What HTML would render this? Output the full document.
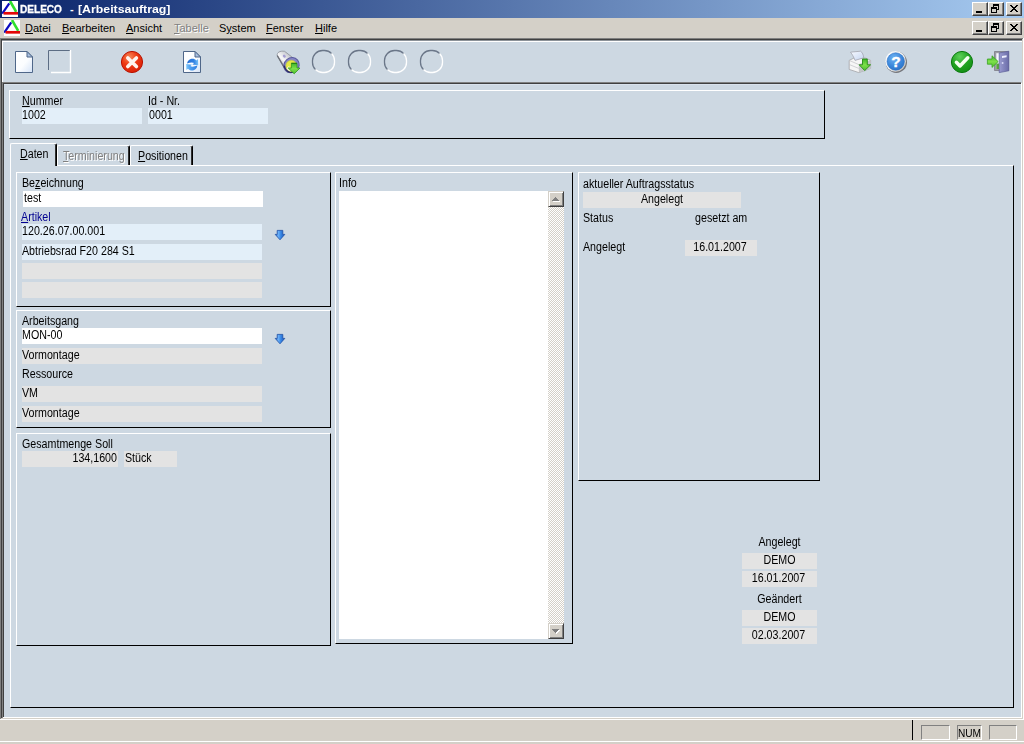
<!DOCTYPE html>
<html lang="de">
<head>
<meta charset="utf-8">
<title>DELECO - [Arbeitsauftrag]</title>
<style>
*{box-sizing:border-box;margin:0;padding:0}
html,body{width:1024px;height:744px;overflow:hidden;background:#d4d0c8}
body{position:relative;font-family:"Liberation Sans",sans-serif;font-size:11px;color:#000;line-height:13px}
.a{position:absolute}
u{text-decoration:underline;text-underline-offset:1px;text-decoration-thickness:1px}
#title{left:0;top:0;width:1024px;height:18px;background:linear-gradient(to right,#0a246a 0%,#a6caf0 100%)}
#title .t{left:20px;top:3px;color:#fff;font-weight:bold;font-size:11px;white-space:pre}
#menu{left:0;top:18px;width:1024px;height:20px;background:#d4d0c8}
#menu span{position:absolute;top:4px;white-space:nowrap}
#menu span.dis{color:#808080;text-shadow:1px 1px 0 #fff}
.wb{position:absolute;width:16px;height:14px;background:#d4d0c8;border:1px solid;border-color:#fff #404040 #404040 #fff;box-shadow:inset -1px -1px 0 #808080}
#mdi{left:0;top:38px;width:1024px;height:682px;background:#cdd8e2}
.fld{position:absolute;white-space:nowrap;overflow:hidden}
.fld .x{position:absolute;top:0;font-size:12px;line-height:14px;transform:scaleX(0.89);white-space:nowrap}
.fb{background:#e3eff9}
.fg{background:#e3e3e3}
.fw{background:#fff}
.lbl{position:absolute;white-space:nowrap;font-size:12px;line-height:14px;transform:scaleX(0.89)}
.sbtn{position:absolute;left:0;width:16px;height:16px;background:#d4d0c8;border:1px solid;border-color:#d4d0c8 #404040 #404040 #d4d0c8;box-shadow:inset 1px 1px 0 #fff,inset -1px -1px 0 #808080}
.gb{position:absolute;border:1px solid;border-color:#fff #000 #000 #fff}
.tab{background:#cdd8e2;border-radius:2px 2px 0 0;border:1px solid;border-color:#fff #000 transparent #fff;border-bottom:0;box-shadow:inset -1px 0 0 #303030}
.tab span{position:absolute;white-space:nowrap;font-size:12px;line-height:14px;transform:scaleX(0.89);transform-origin:0 0}
.tab.dis span{color:#808080;text-shadow:1px 1px 0 #fff}
</style>
</head>
<body>
<div id="title" class="a">
<svg class="a" style="left:2px;top:1px" width="16" height="16" viewBox="0 0 16 16"><rect width="16" height="16" fill="#fff"/><path d="M0.2 12.6 L7.3 2.4" stroke="#0a0ac0" stroke-width="2.2" fill="none"/><path d="M8 0 L14.2 10.8" stroke="#2ee02e" stroke-width="2.6" fill="none"/><path d="M1.6 12.3 H16" stroke="#e40808" stroke-width="2.7" fill="none"/></svg>
<div class="a t" style="left:20px;transform:scaleX(.915);transform-origin:0 0;-webkit-text-stroke:.3px #fff">DELECO</div>
<div class="a t" style="left:70px">-</div>
<div class="a t" style="left:78px;transform:scaleX(1.12);transform-origin:0 0">[Arbeitsauftrag]</div>
<div class="wb" style="left:972px;top:2px"><svg class="a" style="left:-1px;top:-1px" width="16" height="14" viewBox="0 0 16 14" shape-rendering="crispEdges" fill="#000"><rect x="4" y="9" width="6" height="2"/></svg></div>
<div class="wb" style="left:988px;top:2px"><svg class="a" style="left:-1px;top:-1px" width="16" height="14" viewBox="0 0 16 14" shape-rendering="crispEdges" fill="#000"><rect x="5" y="2" width="6" height="2"/><rect x="5" y="4" width="1" height="1"/><rect x="10" y="4" width="1" height="4"/><rect x="9" y="7" width="2" height="1"/><rect x="3" y="5" width="6" height="2"/><rect x="3" y="7" width="1" height="4"/><rect x="8" y="7" width="1" height="4"/><rect x="3" y="10" width="6" height="1"/></svg></div>
<div class="wb" style="left:1006px;top:2px"><svg class="a" style="left:-1px;top:-1px" width="16" height="14" viewBox="0 0 16 14" shape-rendering="crispEdges" fill="#000"><rect x="4" y="3" width="1" height="1"/><rect x="5" y="3" width="1" height="1"/><rect x="10" y="3" width="1" height="1"/><rect x="11" y="3" width="1" height="1"/><rect x="5" y="4" width="1" height="1"/><rect x="6" y="4" width="1" height="1"/><rect x="9" y="4" width="1" height="1"/><rect x="10" y="4" width="1" height="1"/><rect x="6" y="5" width="1" height="1"/><rect x="7" y="5" width="1" height="1"/><rect x="8" y="5" width="1" height="1"/><rect x="9" y="5" width="1" height="1"/><rect x="7" y="6" width="1" height="1"/><rect x="8" y="6" width="1" height="1"/><rect x="6" y="7" width="1" height="1"/><rect x="7" y="7" width="1" height="1"/><rect x="8" y="7" width="1" height="1"/><rect x="9" y="7" width="1" height="1"/><rect x="5" y="8" width="1" height="1"/><rect x="6" y="8" width="1" height="1"/><rect x="9" y="8" width="1" height="1"/><rect x="10" y="8" width="1" height="1"/><rect x="4" y="9" width="1" height="1"/><rect x="5" y="9" width="1" height="1"/><rect x="10" y="9" width="1" height="1"/><rect x="11" y="9" width="1" height="1"/></svg></div>
</div>
<div id="menu" class="a">
<svg class="a" style="left:4px;top:2px" width="16" height="16" viewBox="0 0 16 16"><rect width="16" height="16" fill="#fff"/><path d="M0.2 12.6 L7.3 2.4" stroke="#0a0ac0" stroke-width="2.2" fill="none"/><path d="M8 0 L14.2 10.8" stroke="#2ee02e" stroke-width="2.6" fill="none"/><path d="M1.6 12.3 H16" stroke="#e40808" stroke-width="2.7" fill="none"/></svg>
<span style="left:25px" class=""><u>D</u>atei</span>
<span style="left:62px" class=""><u>B</u>earbeiten</span>
<span style="left:126px" class=""><u>A</u>nsicht</span>
<span style="left:174px" class="dis"><u>T</u>abelle</span>
<span style="left:219px" class="">S<u>y</u>stem</span>
<span style="left:266px" class=""><u>F</u>enster</span>
<span style="left:315px" class=""><u>H</u>ilfe</span>
<div class="wb" style="left:972px;top:3px"><svg class="a" style="left:-1px;top:-1px" width="16" height="14" viewBox="0 0 16 14" shape-rendering="crispEdges" fill="#000"><rect x="4" y="9" width="6" height="2"/></svg></div>
<div class="wb" style="left:988px;top:3px"><svg class="a" style="left:-1px;top:-1px" width="16" height="14" viewBox="0 0 16 14" shape-rendering="crispEdges" fill="#000"><rect x="5" y="2" width="6" height="2"/><rect x="5" y="4" width="1" height="1"/><rect x="10" y="4" width="1" height="4"/><rect x="9" y="7" width="2" height="1"/><rect x="3" y="5" width="6" height="2"/><rect x="3" y="7" width="1" height="4"/><rect x="8" y="7" width="1" height="4"/><rect x="3" y="10" width="6" height="1"/></svg></div>
<div class="wb" style="left:1006px;top:3px"><svg class="a" style="left:-1px;top:-1px" width="16" height="14" viewBox="0 0 16 14" shape-rendering="crispEdges" fill="#000"><rect x="4" y="3" width="1" height="1"/><rect x="5" y="3" width="1" height="1"/><rect x="10" y="3" width="1" height="1"/><rect x="11" y="3" width="1" height="1"/><rect x="5" y="4" width="1" height="1"/><rect x="6" y="4" width="1" height="1"/><rect x="9" y="4" width="1" height="1"/><rect x="10" y="4" width="1" height="1"/><rect x="6" y="5" width="1" height="1"/><rect x="7" y="5" width="1" height="1"/><rect x="8" y="5" width="1" height="1"/><rect x="9" y="5" width="1" height="1"/><rect x="7" y="6" width="1" height="1"/><rect x="8" y="6" width="1" height="1"/><rect x="6" y="7" width="1" height="1"/><rect x="7" y="7" width="1" height="1"/><rect x="8" y="7" width="1" height="1"/><rect x="9" y="7" width="1" height="1"/><rect x="5" y="8" width="1" height="1"/><rect x="6" y="8" width="1" height="1"/><rect x="9" y="8" width="1" height="1"/><rect x="10" y="8" width="1" height="1"/><rect x="4" y="9" width="1" height="1"/><rect x="5" y="9" width="1" height="1"/><rect x="10" y="9" width="1" height="1"/><rect x="11" y="9" width="1" height="1"/></svg></div>
</div>
<div id="mdi" class="a">
<div class="a" style="left:0px;top:0px;width:1023px;height:1px;background:#808080"></div>
<div class="a" style="left:0px;top:0px;width:1px;height:681px;background:#808080"></div>
<div class="a" style="left:1px;top:1px;width:1021px;height:1px;background:#404040"></div>
<div class="a" style="left:1px;top:1px;width:1px;height:680px;background:#404040"></div>
<div class="a" style="left:1023px;top:0px;width:1px;height:682px;background:#fff"></div>
<div class="a" style="left:1022px;top:1px;width:1px;height:680px;background:#d4d0c8"></div>
<div class="a" style="left:0px;top:681px;width:1024px;height:1px;background:#fff"></div>
<div class="a" style="left:1px;top:680px;width:1022px;height:1px;background:#d4d0c8"></div>
<div class="a" style="left:2px;top:2px;width:1020px;height:1px;background:#8d9399"></div>
<div class="a" style="left:2px;top:3px;width:1020px;height:1px;background:#fff"></div>
<div class="a" style="left:2px;top:3px;width:1px;height:41px;background:#fff"></div>
<div class="a" style="left:2px;top:44px;width:1019px;height:1px;background:#808080"></div>
<div class="a" style="left:3px;top:45px;width:1018px;height:1px;background:#404040"></div>
<div class="a" style="left:2px;top:44px;width:1px;height:636px;background:#808080"></div>
<div class="a" style="left:3px;top:45px;width:1px;height:634px;background:#404040"></div>
<div class="a" style="left:4px;top:46px;width:1017px;height:1px;background:#d9e2ec"></div>
<div class="a" style="left:1021px;top:45px;width:1px;height:635px;background:#fff"></div>
<div class="a" style="left:3px;top:679px;width:1019px;height:1px;background:#fff"></div>
</div>
<svg class="a" style="left:0;top:40px" width="1024" height="42" viewBox="0 40 1024 42"><defs><linearGradient id="gdoc" x1="0" y1="0" x2="1" y2="1"><stop offset="0" stop-color="#ffffff"/><stop offset=".55" stop-color="#fbfdff"/><stop offset="1" stop-color="#d5e3f7"/></linearGradient><linearGradient id="ggreen" x1="0" y1="0" x2="0" y2="1"><stop offset="0" stop-color="#3fb52a"/><stop offset=".5" stop-color="#7ee04a"/><stop offset="1" stop-color="#4ec030"/></linearGradient><radialGradient id="gred" cx=".38" cy=".28" r=".8"><stop offset="0" stop-color="#f58a5a"/><stop offset=".45" stop-color="#ee3a14"/><stop offset="1" stop-color="#d81c04"/></radialGradient><radialGradient id="ggrn" cx=".4" cy=".25" r=".85"><stop offset="0" stop-color="#5fd05a"/><stop offset=".5" stop-color="#22a322"/><stop offset="1" stop-color="#0f8a12"/></radialGradient><radialGradient id="gblue" cx=".4" cy=".3" r=".8"><stop offset="0" stop-color="#6fb2f2"/><stop offset=".6" stop-color="#3a86da"/><stop offset="1" stop-color="#2a6fc4"/></radialGradient><linearGradient id="gsilver" x1="0" y1="0" x2="1" y2="1"><stop offset="0" stop-color="#ffffff"/><stop offset=".5" stop-color="#f4f4f4"/><stop offset="1" stop-color="#b8b4ac"/></linearGradient><linearGradient id="gtube" x1="0" y1="1" x2="1" y2="0"><stop offset="0" stop-color="#7c8088"/><stop offset=".42" stop-color="#f8f8fa"/><stop offset="1" stop-color="#a4a8b0"/></linearGradient><linearGradient id="gdoor" x1="0" y1="0" x2="1" y2="0"><stop offset="0" stop-color="#9a9cd0"/><stop offset="1" stop-color="#6a6ca8"/></linearGradient><linearGradient id="gbarrow" x1="0" y1="0" x2="0" y2="1"><stop offset="0" stop-color="#4a8fe0"/><stop offset="1" stop-color="#1f5fc0"/></linearGradient><linearGradient id="gpaper" x1="0" y1="0" x2="1" y2="1"><stop offset="0" stop-color="#f8faff"/><stop offset="1" stop-color="#c4d4f0"/></linearGradient><linearGradient id="grefA" x1="0" y1="0" x2="1" y2="0"><stop offset="0" stop-color="#2872d6"/><stop offset=".6" stop-color="#2f80e2"/><stop offset="1" stop-color="#74c0f8"/></linearGradient><linearGradient id="grefB" x1="0" y1="0" x2="1" y2="0"><stop offset="0" stop-color="#2f7ee0"/><stop offset=".6" stop-color="#4a9cee"/><stop offset="1" stop-color="#7cc6fa"/></linearGradient><linearGradient id="gring" x1="0" y1="0" x2="1" y2="1"><stop offset="0" stop-color="#667284"/><stop offset=".47" stop-color="#6e7a8c"/><stop offset=".53" stop-color="#ffffff"/><stop offset="1" stop-color="#ffffff"/></linearGradient></defs><path d="M15.5 51.5 H27 L32.5 57 V72.5 H15.5 Z" fill="url(#gdoc)" stroke="#4f6789" stroke-width="1"/><path d="M27 51.5 V57 H32.5 Z" fill="#a9c0e0" stroke="#4f6789" stroke-width="1" stroke-linejoin="round"/><path d="M48.5 70 V50.5 H70" fill="none" stroke="#5c6d84" stroke-width="1"/><path d="M51 72.5 H70.5 V50" fill="none" stroke="#ffffff" stroke-width="1.4"/><circle cx="132" cy="62" r="10.6" fill="url(#gred)" stroke="#b81402" stroke-width="1"/><path d="M127.8 57.9 L136.4 66.5 M136.4 57.9 L127.8 66.5" stroke="#fff4ee" stroke-width="3.6" stroke-linecap="round" fill="none"/><path d="M183.5 51.5 H195 L200.5 57 V72.5 H183.5 Z" fill="url(#gdoc)" stroke="#4f6789" stroke-width="1"/><path d="M195 51.5 V57 H200.5 Z" fill="#a9c0e0" stroke="#4f6789" stroke-width="1" stroke-linejoin="round"/><path d="M187.1 63.6 C187.6 58.2 194 57.3 196.4 60.4 L198 59.1 L198.2 65.3 L192.4 64.5 L194.2 63.1 C192.8 62.2 190.2 62.2 187.1 63.6 Z" fill="url(#grefA)"/><path d="M187.1 63.6 C187.6 58.2 194 57.3 196.4 60.4 L198 59.1 L198.2 65.3 L192.4 64.5 L194.2 63.1 C192.8 62.2 190.2 62.2 187.1 63.6 Z" fill="url(#grefB)" transform="rotate(180 192.2 64.6)"/><path d="M277.3 55.6 C276.6 52.6 279.8 50.6 284.6 51.3 L293.2 58 L284 67.4 Z" fill="url(#gtube)" stroke="#8c9098" stroke-width=".8" stroke-linejoin="round"/><path d="M277.5 56 L284 67.2" fill="none" stroke="#6c7078" stroke-width="1.4" stroke-linecap="round"/><ellipse cx="284.3" cy="56.2" rx="1.3" ry="1.7" fill="#a49ed2" transform="rotate(-40 284.3 56.2)"/><ellipse cx="291.5" cy="65.2" rx="8" ry="7.3" fill="#8686c6" stroke="#5a5a9c" stroke-width="1" transform="rotate(-40 291.5 65.2)"/><path d="M284.3 66.2 C285 70.6 289.2 73 293.2 72.2" fill="none" stroke="#2c2c64" stroke-width="1.5" stroke-linecap="round"/><ellipse cx="291.3" cy="65.8" rx="5.4" ry="5.6" fill="#e4e846" stroke="#c4cc3a" stroke-width=".6"/><path d="M286.6 68 C287.4 70.6 289.6 71.6 291.6 71.2 L289 66 Z" fill="#f4f6d0"/><path d="M291.4 63.3 H297 V68 H300 L294.2 73.8 L288.2 68 H291.4 Z" fill="url(#ggreen)" stroke="#2f9a1c" stroke-width=".8" stroke-linejoin="round"/><path d="M291.4 63.3 H297" fill="none" stroke="#1f7a10" stroke-width="1"/><rect x="312.5" y="50.5" width="22" height="22" rx="10" ry="10" fill="none" stroke="url(#gring)" stroke-width="1.3"/><rect x="348.5" y="50.5" width="22" height="22" rx="10" ry="10" fill="none" stroke="url(#gring)" stroke-width="1.3"/><rect x="384.5" y="50.5" width="22" height="22" rx="10" ry="10" fill="none" stroke="url(#gring)" stroke-width="1.3"/><rect x="420.5" y="50.5" width="22" height="22" rx="10" ry="10" fill="none" stroke="url(#gring)" stroke-width="1.3"/><path d="M849.2 60.4 L853.6 58.2 L866 58.2 L870.6 60.4 V68.4 L858.8 72.6 L849.2 69.4 Z" fill="#f6f6f6" stroke="#a4a4a8" stroke-width=".8" stroke-linejoin="round"/><path d="M858.8 64.6 L870.6 60.4 V68.4 L858.8 72.6 Z" fill="#c4c6c8"/><path d="M849.2 60.4 L858.8 64.6 L870.6 60.4 M849.4 64.6 L858.8 68.4" fill="none" stroke="#c0c0c4" stroke-width=".7"/><path d="M850.5 52.2 L860.6 51.2 C862.4 52.4 863.4 55 863.8 57.8 L855 60.4 C853.6 57 852.4 54.4 850.5 52.2 Z" fill="url(#gpaper)" stroke="#9c9ca6" stroke-width=".7" stroke-linejoin="round"/><path d="M862.5 59 H867.3 V64.8 H870.6 L864.7 70.6 L859.2 64.8 H862.5 Z" fill="url(#ggreen)" stroke="#258c14" stroke-width=".9" stroke-linejoin="round"/><circle cx="896.3" cy="62.2" r="10.7" fill="#74767c"/><circle cx="895.6" cy="61.4" r="10.4" fill="url(#gsilver)"/><circle cx="895.7" cy="61.5" r="8.7" fill="url(#gblue)" stroke="#2c70c4" stroke-width=".6"/><text x="895.9" y="67.2" text-anchor="middle" font-family="Liberation Sans,sans-serif" font-weight="bold" font-size="15.5" fill="#ffffff" stroke="#ffffff" stroke-width=".4">?</text><circle cx="962" cy="62" r="10.6" fill="url(#ggrn)" stroke="#0c7a10" stroke-width="1"/><path d="M956.4 62.3 L960 66 L967.8 57.8" fill="none" stroke="#f6fff2" stroke-width="3.5" stroke-linecap="round" stroke-linejoin="round"/><path d="M994.5 51.5 H1008.5 V70.5 H994.5 Z" fill="#9c9ca4" stroke="#7c7c86" stroke-width=".8"/><path d="M996.3 53.2 H1001 V69 H996.3 Z" fill="#f6f8ff"/><path d="M996.3 63.5 H999 V69 H996.3 Z" fill="#58a838"/><path d="M999.2 53 L1008.8 51.2 V70.8 L999.2 72.6 Z" fill="url(#gdoor)" stroke="#5c5e9a" stroke-width=".7" stroke-linejoin="round"/><path d="M1002 56 L1006.6 55.2 V57.2 L1002 58 Z" fill="#eef0ff"/><rect x="1001.8" y="62.2" width="1.6" height="1.6" fill="#e4e6ff"/><path d="M987.4 59 H992 V55.8 L998.2 61.6 L992 67.4 V64.2 H987.4 Z" fill="url(#ggreen)" stroke="#3aa324" stroke-width=".8" stroke-linejoin="round"/></svg>
<div id="c" class="a" style="left:0;top:0;width:1024px;height:744px">
<div class="gb" style="left:9px;top:90px;width:816px;height:49px;"></div>
<div class="lbl" style="left:22px;top:94px;transform-origin:0 0;"><u>N</u>ummer</div>
<div class="fld fb" style="left:22px;top:108px;width:120px;height:16px"><span class="x" style="left:0px;right:0px;transform-origin:0 0;text-align:left">1002</span></div>
<div class="lbl" style="left:148px;top:94px;transform-origin:0 0;">Id - Nr.</div>
<div class="fld fb" style="left:148px;top:108px;width:120px;height:16px"><span class="x" style="left:1px;right:1px;transform-origin:0 0;text-align:left">0001</span></div>
<div class="a" id="page" style="left:10px;top:165px;width:1004px;height:543px;border:1px solid;border-color:#fff #000 #000 #fff"></div>
<div class="a tab sel" style="left:10px;top:143px;width:47px;height:23px"><span style="left:9px;top:3px"><u>D</u>aten</span></div>
<div class="a tab dis" style="left:57px;top:145px;width:73px;height:20px"><span style="left:5px;top:3px"><u>T</u>erminierung</span></div>
<div class="a tab" style="left:130px;top:145px;width:63px;height:20px"><span style="left:7px;top:3px"><u>P</u>ositionen</span></div>
<div class="gb" style="left:16px;top:172px;width:315px;height:135px;"></div>
<div class="lbl" style="left:22px;top:176px;transform-origin:0 0;">Be<u>z</u>eichnung</div>
<div class="fld fw" style="left:23px;top:191px;width:240px;height:16px"><span class="x" style="left:1px;right:1px;transform-origin:0 0;text-align:left">test</span></div>
<div class="lbl" style="left:21px;top:210px;transform-origin:0 0;color:#000090;"><u>A</u>rtikel</div>
<div class="fld fb" style="left:22px;top:224px;width:240px;height:16px"><span class="x" style="left:0px;right:0px;transform-origin:0 0;text-align:left">120.26.07.00.001</span></div>
<div class="fld fb" style="left:22px;top:244px;width:240px;height:16px"><span class="x" style="left:0px;right:0px;transform-origin:0 0;text-align:left">Abtriebsrad F20 284 S1</span></div>
<div class="fld fg" style="left:22px;top:263px;width:240px;height:16px"></div>
<div class="fld fg" style="left:22px;top:282px;width:240px;height:16px"></div>
<svg class="a" style="left:274px;top:229px" width="13" height="13" viewBox="274 229 13 13"><defs><linearGradient id="gba230" x1="0" y1="0" x2="1" y2="0"><stop offset="0" stop-color="#2458b4"/><stop offset=".3" stop-color="#6fb4fa"/><stop offset=".6" stop-color="#3484e4"/><stop offset="1" stop-color="#1f58b6"/></linearGradient></defs><path d="M277.2 230.4 H282.8 V234.4 H284.8 L280 239.8 L275.2 234.4 H277.2 Z" fill="url(#gba230)" stroke="#1d4fa6" stroke-width=".8" stroke-linejoin="round"/></svg>
<svg class="a" style="left:274px;top:333px" width="13" height="13" viewBox="274 333 13 13"><defs><linearGradient id="gba334" x1="0" y1="0" x2="1" y2="0"><stop offset="0" stop-color="#2458b4"/><stop offset=".3" stop-color="#6fb4fa"/><stop offset=".6" stop-color="#3484e4"/><stop offset="1" stop-color="#1f58b6"/></linearGradient></defs><path d="M277.2 334.4 H282.8 V338.4 H284.8 L280 343.8 L275.2 338.4 H277.2 Z" fill="url(#gba334)" stroke="#1d4fa6" stroke-width=".8" stroke-linejoin="round"/></svg>
<div class="gb" style="left:16px;top:310px;width:315px;height:118px;"></div>
<div class="lbl" style="left:22px;top:314px;transform-origin:0 0;">Arbeitsgang</div>
<div class="fld fw" style="left:22px;top:328px;width:240px;height:16px"><span class="x" style="left:0px;right:0px;transform-origin:0 0;text-align:left">MON-00</span></div>
<div class="fld fg" style="left:22px;top:348px;width:240px;height:16px"><span class="x" style="left:0px;right:0px;transform-origin:0 0;text-align:left">Vormontage</span></div>
<div class="lbl" style="left:22px;top:367px;transform-origin:0 0;">Ressource</div>
<div class="fld fg" style="left:22px;top:386px;width:240px;height:16px"><span class="x" style="left:0px;right:0px;transform-origin:0 0;text-align:left">VM</span></div>
<div class="fld fg" style="left:22px;top:406px;width:240px;height:16px"><span class="x" style="left:0px;right:0px;transform-origin:0 0;text-align:left">Vormontage</span></div>
<div class="gb" style="left:16px;top:433px;width:315px;height:213px;"></div>
<div class="lbl" style="left:22px;top:437px;transform-origin:0 0;">Gesamtmenge Soll</div>
<div class="fld fg" style="left:22px;top:451px;width:96px;height:16px"><span class="x" style="left:1px;right:1px;transform-origin:100% 0;text-align:right">134,1600</span></div>
<div class="fld fg" style="left:124px;top:451px;width:53px;height:16px"><span class="x" style="left:0.5px;right:0.5px;transform-origin:0 0;text-align:left">Stück</span></div>
<div class="gb" style="left:335px;top:172px;width:238px;height:472px;"></div>
<div class="lbl" style="left:339px;top:176px;transform-origin:0 0;">Info</div>
<div class="a" id="memo" style="left:339px;top:191px;width:225px;height:448px;background:#fff">
<div class="a" id="sb" style="left:209px;top:0;width:16px;height:448px;background:repeating-conic-gradient(#ffffff 0% 25%,#d4d0c8 0% 50%) 0 0/2px 2px">
<div class="sbtn" style="top:0px"><svg class="a" style="left:-1px;top:-1px" width="16" height="16" viewBox="0 0 16 16" shape-rendering="crispEdges" fill="#808080"><rect x="8" y="7" width="1" height="1" fill="#fff"/><rect x="7" y="8" width="3" height="1" fill="#fff"/><rect x="6" y="9" width="5" height="1" fill="#fff"/><rect x="5" y="10" width="7" height="1" fill="#fff"/><rect x="7" y="6" width="1" height="1"/><rect x="6" y="7" width="3" height="1"/><rect x="5" y="8" width="5" height="1"/><rect x="4" y="9" width="7" height="1"/></svg></div>
<div class="sbtn" style="top:432px"><svg class="a" style="left:-1px;top:-1px" width="16" height="16" viewBox="0 0 16 16" shape-rendering="crispEdges" fill="#808080"><rect x="5" y="7" width="7" height="1" fill="#fff"/><rect x="6" y="8" width="5" height="1" fill="#fff"/><rect x="7" y="9" width="3" height="1" fill="#fff"/><rect x="8" y="10" width="1" height="1" fill="#fff"/><rect x="4" y="6" width="7" height="1"/><rect x="5" y="7" width="5" height="1"/><rect x="6" y="8" width="3" height="1"/><rect x="7" y="9" width="1" height="1"/></svg></div>
</div></div>
<div class="gb" style="left:578px;top:172px;width:242px;height:309px;"></div>
<div class="lbl" style="left:583px;top:177px;transform-origin:0 0;">aktueller Auftragsstatus</div>
<div class="fld fg" style="left:583px;top:192px;width:158px;height:16px"><span class="x" style="left:0px;right:0px;transform-origin:50% 0;text-align:center">Angelegt</span></div>
<div class="lbl" style="left:583px;top:211px;transform-origin:0 0;">Status</div>
<div class="lbl" style="left:695px;top:211px;transform-origin:0 0;">gesetzt am</div>
<div class="lbl" style="left:583px;top:240px;transform-origin:0 0;">Angelegt</div>
<div class="fld fg" style="left:685px;top:240px;width:72px;height:16px"><span class="x" style="left:-1.5px;right:1.5px;transform-origin:50% 0;text-align:center">16.01.2007</span></div>
<div class="lbl" style="left:742px;top:535px;transform-origin:50% 0;width:75px;text-align:center;">Angelegt</div>
<div class="fld fg" style="left:742px;top:553px;width:75px;height:16px"><span class="x" style="left:0px;right:0px;transform-origin:50% 0;text-align:center">DEMO</span></div>
<div class="fld fg" style="left:742px;top:571px;width:75px;height:16px"><span class="x" style="left:-1px;right:1px;transform-origin:50% 0;text-align:center">16.01.2007</span></div>
<div class="lbl" style="left:742px;top:592px;transform-origin:50% 0;width:75px;text-align:center;">Geändert</div>
<div class="fld fg" style="left:742px;top:610px;width:75px;height:16px"><span class="x" style="left:0px;right:0px;transform-origin:50% 0;text-align:center">DEMO</span></div>
<div class="fld fg" style="left:742px;top:628px;width:75px;height:16px"><span class="x" style="left:-1px;right:1px;transform-origin:50% 0;text-align:center">02.03.2007</span></div>
</div>
<div id="status" class="a" style="left:0;top:720px;width:1024px;height:24px;background:#d4d0c8">
<div class="a" style="left:0px;top:21px;width:1024px;height:1px;background:#fff"></div>
<div class="a" style="left:912px;top:0px;width:1px;height:20px;background:#000"></div>
<div class="a" style="left:921px;top:5px;width:29px;height:15px;border:1px solid;border-color:#808080 #fff #fff #808080"></div>
<div class="a" style="left:957px;top:5px;width:25px;height:15px;border:1px solid;border-color:#808080 #fff #fff #808080"><span class="a" style="left:-0.5px;top:1px;font-size:11px;line-height:13px;transform:scaleX(.92);transform-origin:0 0">NUM</span></div>
<div class="a" style="left:989px;top:5px;width:28px;height:15px;border:1px solid;border-color:#808080 #fff #fff #808080"></div>
</div>
</body>
</html>
